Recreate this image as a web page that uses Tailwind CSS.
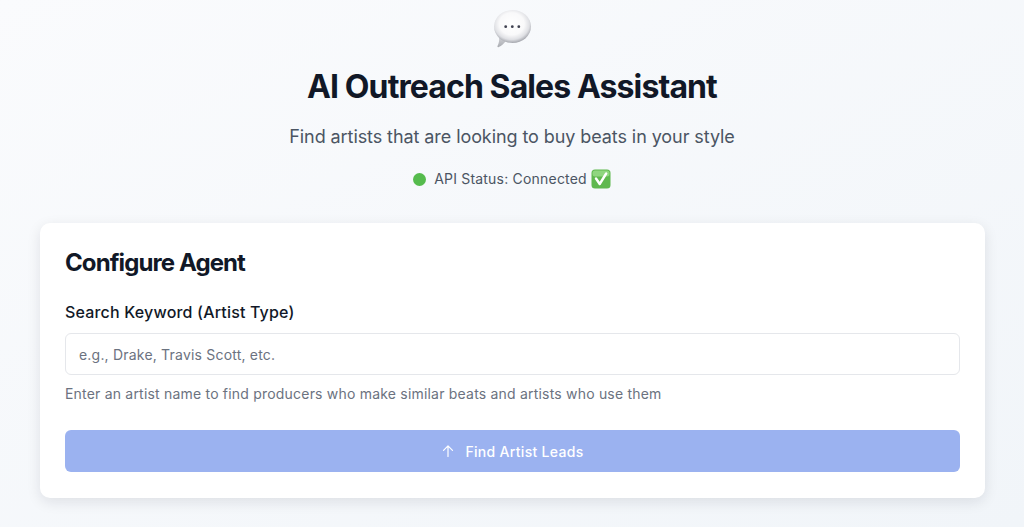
<!DOCTYPE html>
<html lang="en">
<head>
    <meta charset="UTF-8">
    <meta name="viewport" content="width=device-width, initial-scale=1.0">
    <title>AI Outreach Sales Assistant</title>
    <script src="https://cdn.jsdelivr.net/npm/@tailwindcss/browser@4"></script>
</head>
<body class="h-[527px] overflow-hidden bg-gradient-to-br from-[#fafbfd] to-[#f1f5f9] font-['Inter',sans-serif]">
    <!-- Header -->
    <header class="flex flex-col items-center pt-[10px]">
        <svg class="w-[40px] h-[38px]" viewBox="0 0 40 38">
            <defs>
                <radialGradient id="bubble" cx="48%" cy="42%" r="58%">
                    <stop offset="0%" stop-color="#ffffff"/>
                    <stop offset="58%" stop-color="#f9f9fa"/>
                    <stop offset="82%" stop-color="#dfe0e4"/>
                    <stop offset="100%" stop-color="#a4a6ad"/>
                </radialGradient>
                <linearGradient id="tail" x1="0" y1="0" x2="0" y2="1">
                    <stop offset="0%" stop-color="#d5d6da"/>
                    <stop offset="100%" stop-color="#a9abb1"/>
                </linearGradient>
            </defs>
            <path d="M7 26C7.500 30 7 33 5.500 36C5.200 37 5.800 37.500 6.800 37C9.500 36 12 33.500 14.500 30Z" fill="url(#tail)"/>
            <ellipse cx="20.500" cy="16.500" rx="18.500" ry="16.500" fill="url(#bubble)"/>
            <circle cx="13.700" cy="16.700" r="1.400" fill="#3f4150"/>
            <circle cx="20.300" cy="16.700" r="1.400" fill="#3f4150"/>
            <circle cx="26.800" cy="16.700" r="1.400" fill="#3f4150"/>
        </svg>
        <h1 class="mt-[17px] text-[32px] leading-[44px] font-bold tracking-[-0.9px] text-[#111827]">AI Outreach Sales Assistant</h1>
        <p class="mt-[14px] text-[18px] leading-[28px] tracking-[-0.08px] text-[#4b5563]">Find artists that are looking to buy beats in your style</p>
        <div class="mt-[16px] flex items-center h-[24px] text-[14px] leading-[22px] tracking-[0.2px] text-[#4b5563]">
            <span class="w-[13px] h-[13px] rounded-full bg-[#55bb4d] mr-[8px]"></span>
            <span class="-mt-[1px]">API Status: Connected</span>
            <svg class="w-[20px] h-[20px] ml-[4px]" viewBox="0 0 20 20">
                <rect x="0.500" y="0.500" width="19" height="19" rx="3.500" fill="#5fb84f"/>
                <rect x="1.500" y="1.500" width="17" height="6" rx="2.500" fill="#8fd67f"/>
                <path d="M5 9.500L8.700 15L15.200 4.500" fill="none" stroke="#ffffff" stroke-width="2.400" stroke-linecap="round" stroke-linejoin="round"/>
            </svg>
        </div>
    </header>

    <!-- Configure card -->
    <main class="mx-[40px] mt-[32px] w-[945px] h-[275px] bg-white rounded-[10px] px-[25px] pt-[24px] shadow-[0_4px_14px_rgba(15,23,42,0.10)]">
        <h2 class="text-[24px] leading-[32px] font-bold tracking-[-0.9px] text-[#111827]">Configure Agent</h2>
        <label class="block mt-[21px] text-[16px] leading-[24px] tracking-[0.18px] font-medium text-[#111827]">Search Keyword (Artist Type)</label>
        <input type="text" placeholder="e.g., Drake, Travis Scott, etc." class="block mt-[9px] w-full h-[42px] px-[13px] bg-white border border-[#e5e7eb] rounded-[6px] text-[14px] tracking-[0.2px] placeholder:text-[#6b7280]">
        <p class="mt-[9px] text-[14px] leading-[20px] tracking-[0.2px] text-[#6b7280]">Enter an artist name to find producers who make similar beats and artists who use them</p>
        <button class="mt-[26px] flex items-center justify-center w-full h-[42px] bg-[#9bb2f0] rounded-[6px] text-[14px] tracking-[0.3px] font-medium text-white">
            <svg class="w-[14px] h-[14px] mr-[10px]" viewBox="0 0 14 14" fill="none" stroke="#ffffff" stroke-width="1.200" stroke-linecap="round" stroke-linejoin="round">
                <path d="M7 12.500V1.800M2.500 6.300L7 1.800L11.500 6.300"/>
            </svg>
            Find Artist Leads
        </button>
    </main>
</body>
</html>
